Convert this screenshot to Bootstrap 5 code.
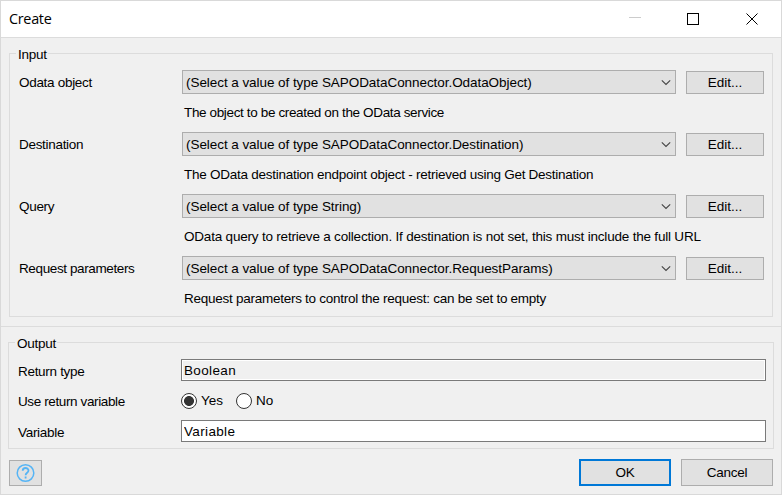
<!DOCTYPE html>
<html lang="en">
<head>
<meta charset="utf-8">
<meta name="viewport" content="width=device-width, initial-scale=1">
<title>Create</title>
<link href="https://cdn.jsdelivr.net/npm/bootstrap@5.3.0/dist/css/bootstrap.min.css" rel="stylesheet">
<style>
body{font:13.5px/16px "Liberation Sans",Arial,sans-serif;color:#000;background:#f0f0f0;overflow:hidden}
.window{width:782px;height:495px;border:1px solid #d9d9d9;background:#f0f0f0}
.titlebar{height:37px;border-bottom:1px solid #dcdcdc;padding-left:8px;padding-right:22px}
.caption{font:14.4px/20px "Open Sans","Noto Sans",sans-serif;letter-spacing:-.3px}
.group{border:1px solid #dcdcdc}
.group-title{background:#f0f0f0;padding:0 1px 0 2px;margin:-7px 0 0 6px;width:max-content;letter-spacing:-.25px}
.group-in{margin:15px 8px 0;height:264px}
.group-out{margin:15px 7px 0;height:107px}
.fields{padding-top:7px}
.field{height:62px}
.lbl{width:172px;padding:5px 0 0 9px;flex:none;letter-spacing:-.3px}
.lbl.tight{letter-spacing:-.38px}
.form-select.combo{width:494px;height:24px;font-size:13.5px;line-height:16px;padding:4px 20px 2px 3px;border:1px solid #adadad;border-radius:0;background-color:#e1e1e1;background-image:none;color:#000;letter-spacing:-.06px}
.combo-wrap{width:494px}
.chev{right:5px;top:9px}
.btn.flat{font-size:13.5px;line-height:16px;padding:0;border:1px solid #adadad;border-radius:0;background:#e1e1e1;color:#000}
.edit{width:78px;height:23px;margin-top:1px}
.btn.act{width:92px;height:27px;letter-spacing:-.25px}
.btn.ok{border:2px solid #0078d7;margin-right:10px}
.help{width:33px;height:26px;margin-top:1px}
.desc{padding:11px 0 0 174px;white-space:nowrap;letter-spacing:-.26px}
.desc.d1{letter-spacing:-.36px}
.desc.d3{letter-spacing:-.2px}
.form-control.box{width:585px;height:22px;padding:0 2px;border:1px solid #7a7a7a;border-radius:0;font-size:13.5px;line-height:18px;color:#000;letter-spacing:.35px}
.form-control.box[readonly]{background:#f0f0f0;box-shadow:inset 0 0 0 1px #fff}
.form-check-input.dot{width:16px;height:16px;margin:0;border:1px solid #333;background-color:#fff}
.form-check-input.dot:checked{background-image:radial-gradient(circle,#333 4.6px,#fff 5.3px)}
.yes{width:31px}
.out-row{padding-top:7px}
.radio-row{height:39px}
.radio-row .lbl{padding-top:2px}
.split{border-top:1px solid #dcdcdc;margin-top:9px}
.foot{padding:10px 8px 0}
</style>
<script src="https://cdn.jsdelivr.net/npm/bootstrap@5.3.0/dist/js/bootstrap.bundle.min.js"></script>
</head>
<body>
<main class="window">
  <header class="titlebar bg-white d-flex align-items-center justify-content-between">
    <span class="caption">Create</span>
    <svg width="130" height="12" viewBox="0 0 130 12" fill="none" shape-rendering="crispEdges"><path d="M0 4.5h12" stroke="#ccc"/><path d="M58.5 .5h11v11h-11z" stroke="#000"/><path d="M117.5 .5l11 11M128.5 .5l-11 11" stroke="#000" shape-rendering="auto"/></svg>
  </header>

  <section class="group group-in">
    <div class="group-title">Input</div>
    <div class="fields">
      <div class="field">
        <div class="d-flex"><label class="lbl" for="f1">Odata object</label>
          <div class="combo-wrap position-relative"><select id="f1" class="form-select combo"><option>(Select a value of type SAPODataConnector.OdataObject)</option></select><svg class="chev position-absolute" width="10" height="8" fill="none" stroke="#444" stroke-width="1.1"><path d="M.8 1.3L5 5.5l4.2-4.2"/></svg></div>
          <button class="btn flat edit ms-auto me-2">Edit...</button></div>
        <div class="desc d1">The object to be created on the OData service</div>
      </div>
      <div class="field">
        <div class="d-flex"><label class="lbl" for="f2">Destination</label>
          <div class="combo-wrap position-relative"><select id="f2" class="form-select combo"><option>(Select a value of type SAPODataConnector.Destination)</option></select><svg class="chev position-absolute" width="10" height="8" fill="none" stroke="#444" stroke-width="1.1"><path d="M.8 1.3L5 5.5l4.2-4.2"/></svg></div>
          <button class="btn flat edit ms-auto me-2">Edit...</button></div>
        <div class="desc">The OData destination endpoint object - retrieved using Get Destination</div>
      </div>
      <div class="field">
        <div class="d-flex"><label class="lbl" for="f3">Query</label>
          <div class="combo-wrap position-relative"><select id="f3" class="form-select combo"><option>(Select a value of type String)</option></select><svg class="chev position-absolute" width="10" height="8" fill="none" stroke="#444" stroke-width="1.1"><path d="M.8 1.3L5 5.5l4.2-4.2"/></svg></div>
          <button class="btn flat edit ms-auto me-2">Edit...</button></div>
        <div class="desc d3">OData query to retrieve a collection. If destination is not set, this must include the full URL</div>
      </div>
      <div class="field">
        <div class="d-flex"><label class="lbl tight" for="f4">Request parameters</label>
          <div class="combo-wrap position-relative"><select id="f4" class="form-select combo"><option>(Select a value of type SAPODataConnector.RequestParams)</option></select><svg class="chev position-absolute" width="10" height="8" fill="none" stroke="#444" stroke-width="1.1"><path d="M.8 1.3L5 5.5l4.2-4.2"/></svg></div>
          <button class="btn flat edit ms-auto me-2">Edit...</button></div>
        <div class="desc">Request parameters to control the request: can be set to empty</div>
      </div>
    </div>
  </section>

  <div class="split"></div>

  <section class="group group-out">
    <div class="group-title">Output</div>
    <div class="d-flex out-row"><label class="lbl" for="rt">Return type</label><input id="rt" class="form-control box" value="Boolean" readonly></div>
    <div class="d-flex align-items-center radio-row"><span class="lbl tight">Use return variable</span>
      <input class="form-check-input dot" type="radio" name="use" id="yes" checked><label class="ms-1 me-1 yes" for="yes">Yes</label>
      <input class="form-check-input dot" type="radio" name="use" id="no"><label class="ms-1" for="no">No</label></div>
    <div class="d-flex"><label class="lbl" for="vr">Variable</label><input id="vr" class="form-control box" value="Variable"></div>
  </section>

  <footer class="foot d-flex">
    <button class="btn flat help d-flex align-items-center justify-content-center" aria-label="Help"><svg width="20" height="20" fill="none" stroke="#55b4f5" stroke-width="1.5"><circle cx="9.5" cy="10" r="8.3"/><path d="M6.7 7.7c0-3.7 5.8-3.5 5.8-.2 0 2.3-2.9 2.2-2.9 4.7M9.6 13.4v2" stroke-width="1.8"/></svg></button>
    <button class="btn flat act ok ms-auto">OK</button>
    <button class="btn flat act">Cancel</button>
  </footer>
</main>
</body>
</html>
